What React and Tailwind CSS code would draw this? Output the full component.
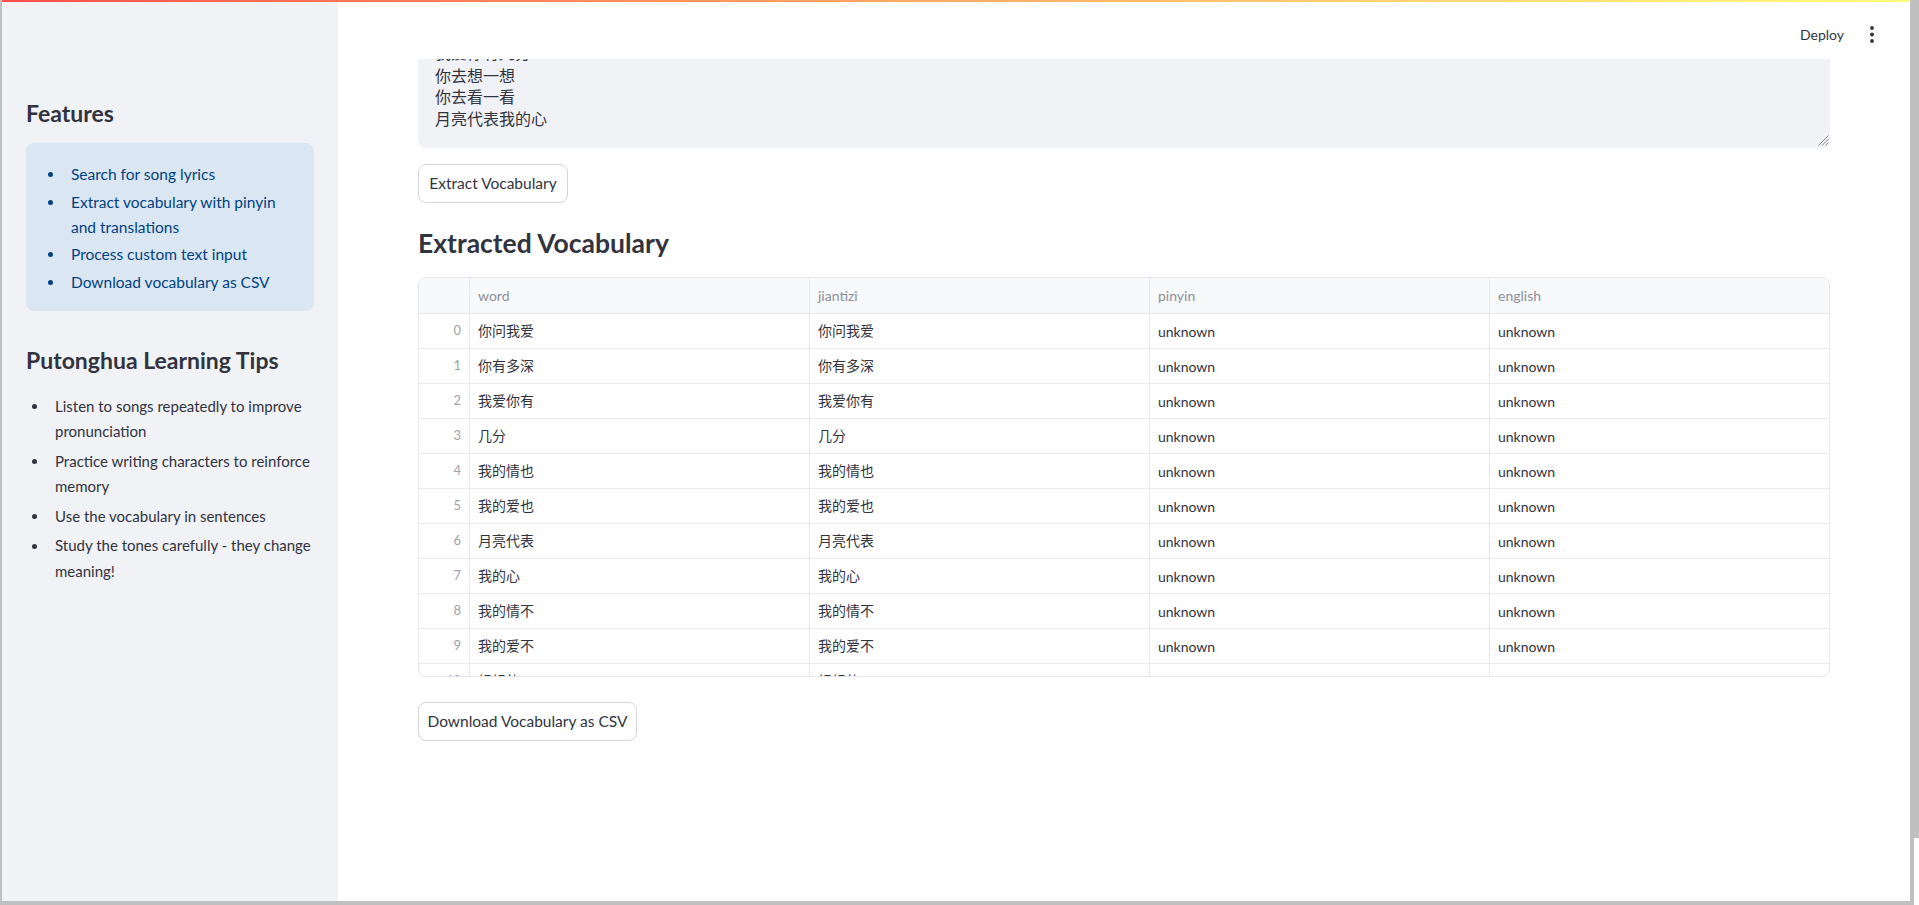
import React from "react";

const FONT = { fontFamily: 'Lato, "Noto Sans CJK SC", sans-serif' };

const rows = [
  "你问我爱",
  "你有多深",
  "我爱你有",
  "几分",
  "我的情也",
  "我的爱也",
  "月亮代表",
  "我的心",
  "我的情不",
  "我的爱不",
  "轻轻的",
];

function Dot() {
  return <span className="block h-[5px] w-[5px] rounded-full bg-current" />;
}

function Bullet({ lines, leading }) {
  return (
    <li className="flex">
      <span className={`flex w-[29px] shrink-0 items-center pl-[6px] ${leading}`}>
        <Dot />
      </span>
      <span className="whitespace-nowrap">
        {lines.map((l, i) => (
          <span key={i} className={`block ${leading}`}>
            {l}
          </span>
        ))}
      </span>
    </li>
  );
}

function Sidebar() {
  return (
    <aside className="w-[336px] shrink-0 bg-[#f0f2f6] px-[24px] pt-[97px] text-[#31333F]">
      <h3 className="text-[23px] font-bold leading-[29px]">Features</h3>
      <div className="mt-[15px] rounded-[8px] bg-[#dbe6f3] pb-[16px] pl-[16px] pt-[19px] text-[15.5px] text-[#004280]">
        <ul className="flex flex-col gap-[2.5px]">
          <Bullet leading="h-[25px] leading-[25px]" lines={["Search for song lyrics"]} />
          <Bullet
            leading="h-[25px] leading-[25px]"
            lines={["Extract vocabulary with pinyin", "and translations"]}
          />
          <Bullet leading="h-[25px] leading-[25px]" lines={["Process custom text input"]} />
          <Bullet leading="h-[25px] leading-[25px]" lines={["Download vocabulary as CSV"]} />
        </ul>
      </div>
      <h3 className="mt-[35px] text-[23px] font-bold leading-[29px]">
        Putonghua Learning Tips
      </h3>
      <ul className="mt-[19px] flex flex-col gap-[4px] text-[15px] text-[#31333F]">
        <Bullet
          leading="h-[25.6px] leading-[25.6px]"
          lines={["Listen to songs repeatedly to improve", "pronunciation"]}
        />
        <Bullet
          leading="h-[25.6px] leading-[25.6px]"
          lines={["Practice writing characters to reinforce", "memory"]}
        />
        <Bullet leading="h-[25.6px] leading-[25.6px]" lines={["Use the vocabulary in sentences"]} />
        <Bullet
          leading="h-[25.6px] leading-[25.6px]"
          lines={["Study the tones carefully - they change", "meaning!"]}
        />
      </ul>
    </aside>
  );
}

function Header() {
  return (
    <div className="flex h-[57px] shrink-0 items-center justify-end gap-[26px] bg-white pr-[36px] pt-[8px]">
      <span className="text-[14px] leading-[20px] text-[#31333F]">Deploy</span>
      <svg width="4" height="17" viewBox="0 0 4 17" className="text-[#31333F]">
        <circle cx="2" cy="2" r="1.9" fill="currentColor" />
        <circle cx="2" cy="8.5" r="1.9" fill="currentColor" />
        <circle cx="2" cy="15" r="1.9" fill="currentColor" />
      </svg>
    </div>
  );
}

function TextArea() {
  return (
    <div className="relative h-[89px] overflow-hidden rounded-b-[8px] bg-[#f0f2f6]">
      <div
        className="-mt-[17.5px] pl-[17px] text-[16px] leading-[21.6px] text-[#31333F]"
        style={{ fontFamily: '"Noto Sans CJK SC", sans-serif' }}
      >
        <div className="mb-[1.5px]">我爱你有几分</div>
        <div>你去想一想</div>
        <div>你去看一看</div>
        <div>月亮代表我的心</div>
      </div>
      <svg
        width="11"
        height="11"
        viewBox="0 0 11 11"
        className="absolute bottom-[2px] right-[1px]"
      >
        <path d="M10.5 0.5 L0.5 10.5 M10.5 4 L4 10.5 M10.5 7.5 L7.5 10.5" stroke="#8a8a8a" strokeWidth="1" />
      </svg>
    </div>
  );
}

function Button({ children, w }) {
  return (
    <button
      className={`flex h-[39px] ${w} items-center justify-center rounded-[8px] border border-[#d6d6d9] bg-white text-[15.5px] text-[#31333F]`}
    >
      {children}
    </button>
  );
}

function Table() {
  const cell = "flex items-center border-r border-[#e8e8eb] px-[8px]";
  const cjk = { fontFamily: 'Lato, "Noto Sans CJK SC", sans-serif' };
  return (
    <div className="h-[400px] w-[1412px] overflow-hidden rounded-[8px] border border-[#e6e6ea] text-[14px]">
      <div className="grid h-[36px] grid-cols-[51px_340px_340px_340px_1fr] border-b border-[#e6e6ea] bg-[#f8f9fb] text-[#8d8f96]">
        <div className={cell} />
        <div className={cell}>word</div>
        <div className={cell}>jiantizi</div>
        <div className={cell}>pinyin</div>
        <div className="flex items-center px-[8px]">english</div>
      </div>
      {rows.map((w, i) => (
        <div
          key={i}
          className="grid h-[35px] grid-cols-[51px_340px_340px_340px_1fr] border-b border-[#ebebee] text-[#31333F]"
        >
          <div className={`${cell} justify-end text-[13px] text-[#a0a2a9]`}>{i}</div>
          <div className={`${cell} pb-[2px]`} style={cjk}>
            {w}
          </div>
          <div className={`${cell} pb-[2px]`} style={cjk}>
            {w}
          </div>
          <div className={cell}>unknown</div>
          <div className="flex items-center px-[8px]">unknown</div>
        </div>
      ))}
    </div>
  );
}

function Main() {
  return (
    <main className="flex min-w-0 flex-1 flex-col overflow-hidden bg-white">
      <Header />
      <div className="px-[80px]">
        <TextArea />
        <div className="mt-[16px]">
          <Button w="w-[150px]">Extract Vocabulary</Button>
        </div>
        <h3 className="mt-[23px] text-[26.5px] font-bold leading-[34px] text-[#31333F]">
          Extracted Vocabulary
        </h3>
        <div className="mt-[17px]">
          <Table />
        </div>
        <div className="mt-[25px]">
          <Button w="w-[219px]">Download Vocabulary as CSV</Button>
        </div>
      </div>
    </main>
  );
}

export default function App() {
  return (
    <div className="flex h-[905px] w-[1919px] overflow-hidden bg-[#c0c0c0]" style={FONT}>
      <div className="w-[2px] shrink-0" />
      <div className="flex w-[1908px] shrink-0 flex-col">
        <div className="flex h-[901px] flex-col bg-white">
          <div className="h-[2px] shrink-0 bg-gradient-to-r from-[#ff4b4b] to-[#fffd80]" />
          <div className="flex min-h-0 flex-1">
            <Sidebar />
            <Main />
          </div>
        </div>
      </div>
      <div className="flex w-[9px] shrink-0 flex-col">
        <div className="flex-1" />
        <div className="flex h-[67px]">
          <div className="w-[4px]" />
          <div className="flex-1 bg-white" />
        </div>
      </div>
    </div>
  );
}
